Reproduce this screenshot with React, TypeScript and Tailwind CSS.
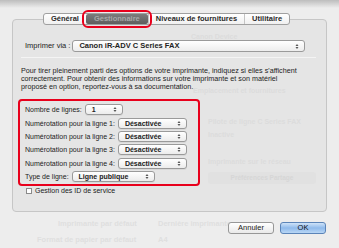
import React from "react";

const font = { fontFamily: '"Liberation Sans", Arial, sans-serif' };

function Arrows() {
  return (
    <svg width="4" height="7" viewBox="0 0 4 7" className="shrink-0">
      <path d="M0.5 3 L2 1 L3.5 3 Z" fill="#555" />
      <path d="M0.5 4 L2 6 L3.5 4 Z" fill="#555" />
    </svg>
  );
}

function Popup({ value, width }: { value: string; width: string }) {
  return (
    <div
      className={`${width} h-[11px] flex items-center justify-between pl-[6px] pr-[5px] rounded-[3px] border border-[#9a9a9a] bg-gradient-to-b from-white to-[#ececec] shadow-[0_1px_0_#d8d8d8]`}
    >
      <span className="text-[7px] font-bold text-[#222] leading-none">{value}</span>
      <Arrows />
    </div>
  );
}

function Row({ label, value, width }: { label: string; value: string; width: string }) {
  return (
    <div className="flex items-center gap-[3px] h-[13.4px]">
      <span className="text-[7px] text-[#222] leading-none">{label}</span>
      <Popup value={value} width={width} />
    </div>
  );
}

export default function App() {
  const tabs = ["Général", "Gestionnaire", "Niveaux de fournitures", "Utilitaire"];
  return (
    <div
      className="w-[339px] h-[248px] bg-[#ededed] relative overflow-hidden"
      style={font}
    >
      <div className="h-[8px] bg-gradient-to-b from-[#bdbdbd] to-[#ededed]" />

      {/* ghost text behind the sheet */}
      <div className="absolute left-[58px] top-[218px] text-[7.5px] font-bold text-[#dfdfdf]">
        Imprimante par défaut
      </div>
      <div className="absolute left-[158px] top-[218px] text-[7.5px] font-bold text-[#dfdfdf]">
        Dernière imprimante
      </div>
      <div className="absolute left-[37px] top-[234px] text-[7.5px] font-bold text-[#dfdfdf]">
        Format de papier par défaut
      </div>
      <div className="absolute left-[158px] top-[234px] text-[7.5px] font-bold text-[#dfdfdf]">
        A4
      </div>

      {/* tabs */}
      <div className="relative z-10 flex mt-[5px] ml-[43px] h-[12px]">
        <div className="flex h-[12px] rounded-[3px] border border-[#a0a0a0] bg-gradient-to-b from-white to-[#f0f0f0]">
          {tabs.map((t, i) => (
            <div
              key={t}
              className={`flex items-center text-[7.5px] font-bold leading-none ${
                i === 1
                  ? "bg-gradient-to-b from-[#7c7c7c] to-[#5e5e5e] text-[#a9a9a9] px-[8px] outline-2 outline-[#e8001c] outline-offset-[2px] rounded-[2px]"
                  : "text-[#2a2a2a] px-[7px]"
              } ${i > 1 ? "border-l border-[#c4c4c4]" : ""}`}
            >
              {t}
            </div>
          ))}
        </div>
      </div>

      {/* group panel */}
      <div className="relative mt-[-6px] ml-[12px] w-[315px] h-[193px] rounded-[4px] border border-[#c6c6c6] bg-[#e5e5e5]">
        <div className="absolute left-[178px] top-[12px] text-[7px] font-bold text-[#dcdcdc]">
          Canon Device
        </div>
        <div className="absolute left-[180px] top-[66px] text-[7px] font-bold text-[#dcdcdc]">
          Emplacement et fournitures
        </div>
        <div className="absolute left-[195px] top-[97px] text-[7px] font-bold text-[#dcdcdc]">
          Pilote de ligne C Series FAX
        </div>
        <div className="absolute left-[195px] top-[110px] text-[7px] font-bold text-[#dcdcdc]">
          Inactive
        </div>
        <div className="absolute left-[195px] top-[137px] text-[7px] font-bold text-[#dcdcdc]">
          Imprimante sur le réseau
        </div>
        <div className="absolute left-[195px] top-[152px] w-[108px] h-[12px] rounded-[3px] bg-[#e1e1e1] text-[6.5px] font-bold text-[#d6d6d6] flex items-center justify-center">
          Préférences Partage
        </div>

        <div className="relative flex flex-col pt-[20px] pl-[12px]">
          <div className="flex items-center gap-[2px] h-[12px]">
            <span className="text-[7.5px] text-[#222] leading-none">Imprimer via :</span>
            <div className="w-[233px] h-[12px] flex items-center justify-between pl-[6px] pr-[5px] rounded-[3px] border border-[#9a9a9a] bg-gradient-to-b from-white to-[#ededed]">
              <span className="text-[7.5px] font-bold text-[#222] leading-none">
                Canon iR-ADV C Series FAX
              </span>
              <Arrows />
            </div>
          </div>
          <div className="ml-[-4px] mt-[5px] w-[295px] h-px bg-[#c9c9c9] border-b border-[#f4f4f4]" />

          <p className="ml-[-4px] mt-[9px] text-[7.2px] leading-[8px] text-[#222] whitespace-nowrap">
            Pour tirer pleinement parti des options de votre imprimante, indiquez si elles s'affichent
            <br />
            correctement. Pour obtenir des informations sur votre imprimante et son matériel
            <br />
            proposé en option, reportez-vous à sa documentation.
          </p>

          <div className="ml-[-7px] mt-[8px] w-[182px] h-[87px] rounded-[4px] border-2 border-[#e8001c] pl-[5px] pt-[2px] flex flex-col">
            <Row label="Nombre de lignes:" value="1" width="w-[38px]" />
            <Row label="Numérotation pour la ligne 1:" value="Désactivée" width="w-[69px]" />
            <Row label="Numérotation pour la ligne 2:" value="Désactivée" width="w-[69px]" />
            <Row label="Numérotation pour la ligne 3:" value="Désactivée" width="w-[69px]" />
            <Row label="Numérotation pour la ligne 4:" value="Désactivée" width="w-[69px]" />
            <Row label="Type de ligne:" value="Ligne publique" width="w-[83px]" />
          </div>

          <div className="flex items-center gap-[3px] mt-0 h-[9px] ml-[1px]">
            <div className="w-[6px] h-[6px] border border-[#8a8a8a] bg-white" />
            <span className="text-[7px] text-[#222] leading-none">Gestion des ID de service</span>
          </div>
        </div>
      </div>

      {/* buttons */}
      <div className="relative flex justify-end gap-[6px] mt-[10px] mr-[13px]">
        <div className="w-[46px] h-[12px] rounded-[3px] border border-[#979797] bg-gradient-to-b from-white to-[#e9e9e9] flex items-center justify-center text-[7.5px] text-[#222]">
          Annuler
        </div>
        <div className="w-[46px] h-[12px] rounded-[3px] border border-[#5b84b8] bg-gradient-to-b from-[#cfe3f8] via-[#8fbaeb] to-[#b8d6f5] flex items-center justify-center text-[7.5px] text-[#111]">
          OK
        </div>
      </div>
    </div>
  );
}
